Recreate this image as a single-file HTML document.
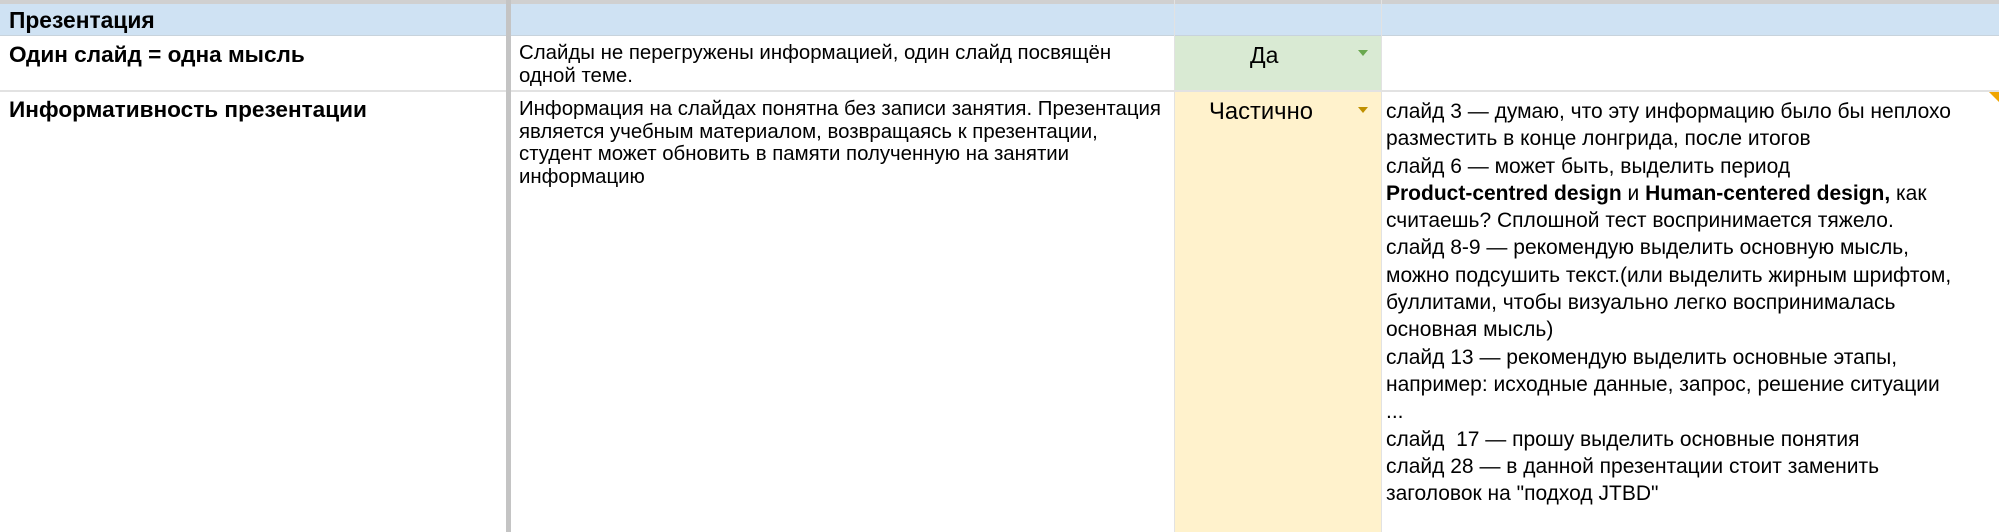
<!DOCTYPE html>
<html><head><meta charset="utf-8"><style>
*{margin:0;padding:0;box-sizing:border-box}
body{width:1999px;height:532px;overflow:hidden;background:#fff;font-family:"Liberation Sans",Arial,sans-serif;color:#000;position:relative}
.a{position:absolute}
.l{white-space:nowrap}
</style></head><body>
<div class="a" style="left:0;top:0;width:1999px;height:4px;background:#d0d0d0"></div>
<div class="a" style="left:0;top:4px;width:1999px;height:32px;background:#cfe2f3"></div>
<div class="a" style="left:1175px;top:36px;width:207px;height:55px;background:#d9ead3"></div>
<div class="a" style="left:1175px;top:91px;width:207px;height:441px;background:#fff2cc"></div>
<div class="a" style="left:0;top:35px;width:1999px;height:1px;background:#c8d3dc"></div>
<div class="a" style="left:0;top:90px;width:1999px;height:2px;background:#e2e2e2"></div>
<div class="a" style="left:1174px;top:0;width:1px;height:532px;background:#e2e2e2"></div>
<div class="a" style="left:1381px;top:0;width:1px;height:532px;background:#e2e2e2"></div>
<div class="a" style="left:506px;top:0;width:5px;height:532px;background:#c4c4c4"></div>
<div class="a l" style="left:9px;top:7px;font-size:22.8px;font-weight:bold">Презентация</div>
<div class="a l" style="left:9px;top:42px;font-size:22.6px;font-weight:bold">Один слайд = одна мысль</div>
<div class="a l" style="left:9px;top:97px;font-size:22.6px;font-weight:bold">Информативность презентации</div>
<div class="a" style="left:519px;top:42px;font-size:20.4px;line-height:22.5px;width:650px;white-space:nowrap">Слайды не перегружены информацией, один слайд посвящён<br>одной теме.</div>
<div class="a" style="left:519px;top:98px;font-size:20.4px;line-height:22.5px;width:650px;white-space:nowrap">Информация на слайдах понятна без записи занятия. Презентация<br>является учебным материалом, возвращаясь к презентации,<br>студент может обновить в памяти полученную на занятии<br>информацию</div>
<div class="a l" style="left:1250px;top:42px;font-size:23px">Да</div>
<svg class="a" style="left:1358px;top:50px" width="10" height="7"><path d="M0 0H10L5 6Z" fill="#6aa84f"/></svg>
<div class="a l" style="left:1209px;top:98px;font-size:23.8px">Частично</div>
<svg class="a" style="left:1358px;top:107px" width="10" height="7"><path d="M0 0H10L5 6Z" fill="#bf9000"/></svg>
<svg class="a" style="left:1989px;top:92px" width="10" height="10"><path d="M0 0H10V10Z" fill="#f0a500"/></svg>
<div class="a" style="left:1386px;top:98px;width:613px;overflow:hidden;font-size:21px;line-height:27.3px;white-space:nowrap">слайд 3 — думаю, что эту информацию было бы неплохо<br>разместить в конце лонгрида, после итогов<br>слайд 6 — может быть, выделить период<br><b>Product-centred design</b> и <b>Human-centered design,</b> как<br>считаешь? Сплошной тест воспринимается тяжело.<br>слайд 8-9 — рекомендую выделить основную мысль,<br>можно подсушить текст.(или выделить жирным шрифтом,<br>буллитами, чтобы визуально легко воспринималась<br>основная мысль)<br>слайд 13 — рекомендую выделить основные этапы,<br>например: исходные данные, запрос, решение ситуации<br>...<br>слайд&nbsp; 17 — прошу выделить основные понятия<br>слайд 28 — в данной презентации стоит заменить<br>заголовок на "подход JTBD"</div>
</body></html>
